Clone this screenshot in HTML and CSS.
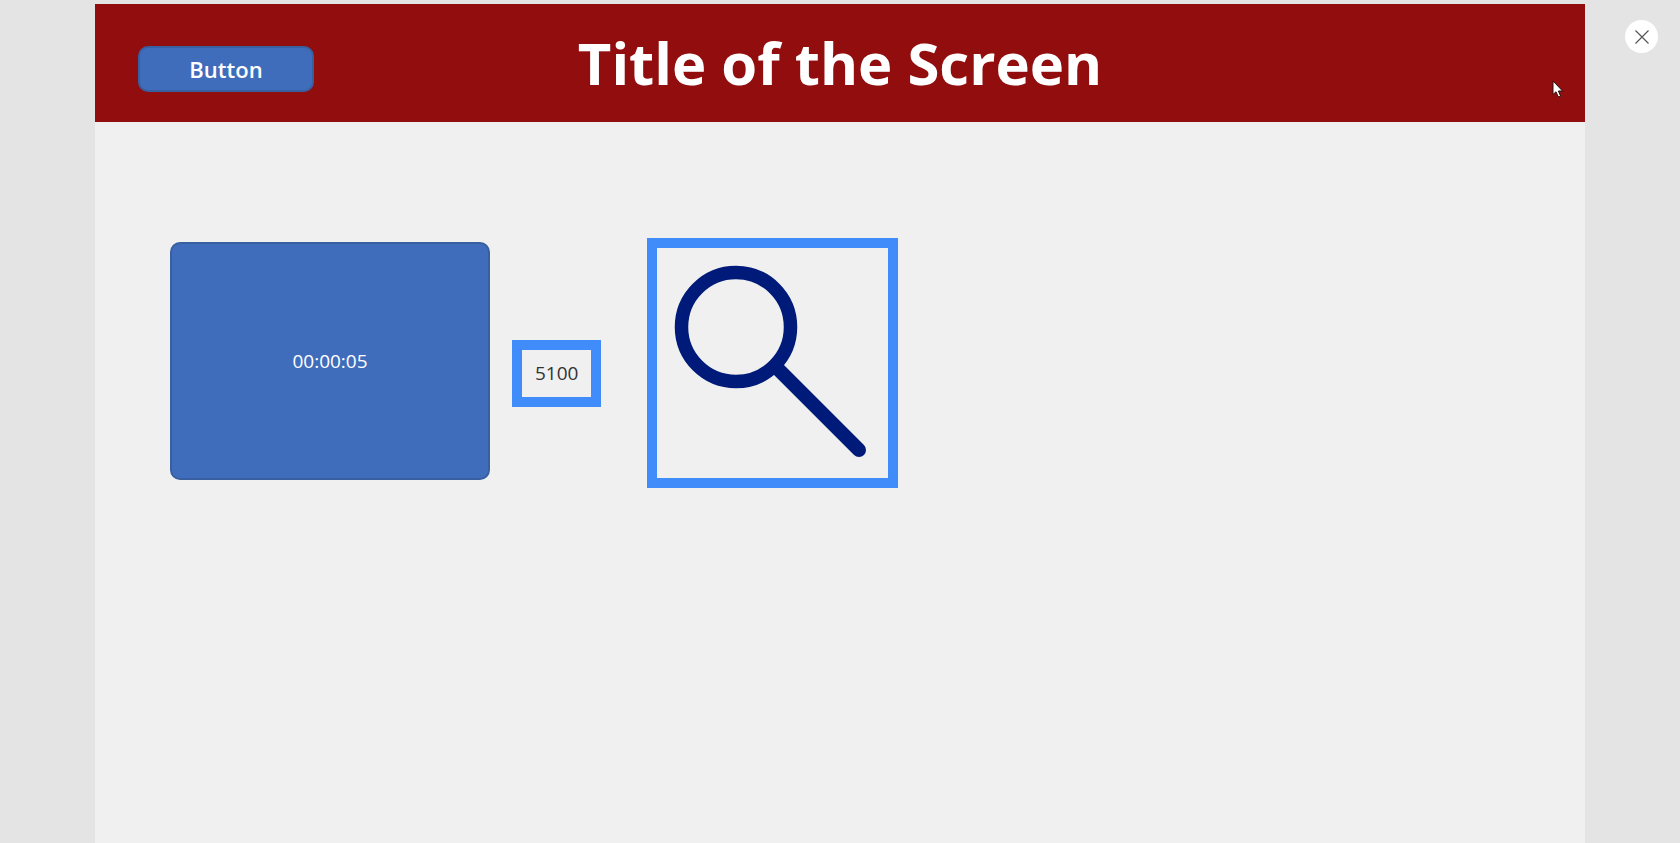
FILE: index.html
```html
<!DOCTYPE html>
<html lang="en">
<head>
    <meta charset="UTF-8">
    <meta name="viewport" content="width=device-width, initial-scale=1.0">
    <title>Title of the Screen</title>
    <link rel="stylesheet" href="styles.css">
</head>
<body>
    <div class="screen">
        <header class="header">
            <div class="header-left">
                <button type="button" class="btn btn-header">Button</button>
            </div>
            <h1>Title of the Screen</h1>
        </header>

        <main class="controls">
            <button type="button" class="btn btn-timer">00:00:05</button>
            <div class="counter">5100</div>
            <button type="button" class="search" aria-label="Search">
                <svg viewBox="0 0 231 230" fill="none" stroke="#001a79">
                    <circle cx="79" cy="79" r="54.5" stroke-width="13.5"/>
                    <path d="M120 120L202 202" stroke-width="14" stroke-linecap="round"/>
                </svg>
            </button>
        </main>
    </div>

    <button type="button" class="close" aria-label="Close">
        <svg width="14" height="14" viewBox="0 0 14 14" stroke="#555" stroke-width="1.2">
            <path d="M0.5 0.5L13.5 13.5M13.5 0.5L0.5 13.5"/>
        </svg>
    </button>

    <svg class="cursor" width="12" height="19" viewBox="0 0 12 19">
        <path d="M1 1V14.5L4 11.8L6.3 17L8.6 16L6.4 11H10.6Z" fill="#fff" stroke="#2a1010" stroke-width="1"/>
    </svg>
</body>
</html>
```

FILE: styles.css
```css
* {
    box-sizing: border-box;
}

body {
    margin: 0;
    padding: 4px 95px 0;
    min-height: 100vh;
    display: flex;
    background: #e4e4e4;
    font-family: "Open Sans", sans-serif;
}

button {
    padding: 0;
    font-family: inherit;
    cursor: pointer;
}

/* App screen */
.screen {
    flex: 1;
    background: #f0f0f0;
}

.header {
    display: grid;
    grid-template-columns: 1fr auto 1fr;
    align-items: center;
    height: 118px;
    background: #920d0e;
}

.header-left {
    padding: 12px 0 0 43px;
}

.header h1 {
    margin: 0;
    color: #fff;
    font-size: 58px;
    font-weight: 700;
    line-height: 80px;
}

/* Buttons */
.btn {
    background: #3f6dbb;
    border: 2px solid #385f9f;
    border-radius: 10px;
    color: #fff;
}

.btn-header {
    width: 176px;
    height: 46px;
    font-size: 22px;
    font-weight: 600;
}

.btn-timer {
    width: 320px;
    height: 238px;
    margin-top: 4px;
    font-size: 19px;
}

.controls {
    display: flex;
    align-items: flex-start;
    padding: 116px 75px;
}

.counter {
    margin: 102px 46px 0 22px;
    padding: 10px 13px;
    border: 10px solid #408cfb;
    color: #333;
    font-size: 19px;
    line-height: 27px;
}

.search {
    width: 251px;
    height: 250px;
    border: 10px solid #408cfb;
    background: none;
}

.search svg {
    display: block;
    width: 100%;
}

/* Overlay */
.close {
    position: absolute;
    top: 20px;
    right: 22px;
    width: 33px;
    height: 33px;
    display: flex;
    align-items: center;
    justify-content: center;
    border: none;
    border-radius: 50%;
    background: #fff;
}

.cursor {
    position: absolute;
    top: 80px;
    right: 116px;
}
```
